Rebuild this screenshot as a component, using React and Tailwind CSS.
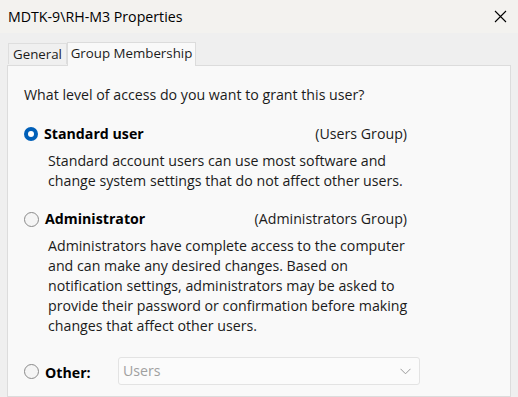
import React from "react";

function Radio({ checked }) {
  if (checked) {
    return (
      <span className="flex h-[14px] w-[14px] shrink-0 items-center justify-center rounded-full bg-[#005fb8]">
        <span className="h-[6px] w-[6px] rounded-full bg-white" />
      </span>
    );
  }
  return (
    <span className="h-[15px] w-[15px] shrink-0 rounded-full border border-[#8a8a8a] bg-[#f5f5f5]" />
  );
}

function Option({ checked, label, group, children }) {
  return (
    <div className="flex flex-col">
      <div className="flex h-[20px] items-center">
        <Radio checked={checked} />
        <span className="ml-[6px] font-bold text-black">{label}</span>
        <span className="ml-auto whitespace-nowrap text-right">{group}</span>
      </div>
      <div className="mt-[7px] whitespace-nowrap pl-[24px] leading-[20px]">{children}</div>
    </div>
  );
}

export default function App() {
  return (
    <div
      className="flex h-[397px] w-[518px] flex-col overflow-hidden bg-[#efefef] text-[14.2px] text-[#1b1b1b]"
      style={{ fontFamily: '"Segoe UI", "Open Sans", sans-serif' }}
    >
      {/* title bar */}
      <div className="flex h-[33px] shrink-0 items-center justify-between bg-[#f3f2ef] pl-[8px] pr-[11px]">
        <span className="text-[14.2px] text-black">MDTK-9\RH-M3 Properties</span>
        <svg width="13" height="13" viewBox="0 0 13 13" className="text-black">
          <path d="M1 1 L12 12 M12 1 L1 12" stroke="currentColor" strokeWidth="1.1" />
        </svg>
      </div>

      {/* tabs */}
      <div className="flex h-[32px] shrink-0 items-end pl-[8px]">
        <div className="mb-[1px] flex h-[21px] w-[59px] items-center justify-center whitespace-nowrap border border-b-0 border-[#dedede] bg-[#f0f0f0] pt-[2px] text-[13.3px]">
          General
        </div>
        <div className="relative z-10 -mb-[1px] flex h-[24px] w-[129px] items-center justify-center whitespace-nowrap border border-b-0 border-[#dcdcdc] bg-[#f9f9f9] pb-[2px] text-[13.3px]">
          Group Membership
        </div>
      </div>

      {/* panel */}
      <div className="ml-[7px] mr-[7px] flex-1 border border-[#dcdcdc] bg-[#f9f9f9] pl-[16px] pt-[19px]">
        <div className="w-[383px]">
          <div className="h-[20px] whitespace-nowrap leading-[20px]">What level of access do you want to grant this user?</div>

          <div className="mt-[19px]">
            <Option checked label="Standard user" group="(Users Group)">
              Standard account users can use most software and
              <br />
              change system settings that do not affect other users.
            </Option>
          </div>

          <div className="mt-[18px]">
            <Option label="Administrator" group="(Administrators Group)">
              Administrators have complete access to the computer
              <br />
              and can make any desired changes. Based on
              <br />
              notification settings, administrators may be asked to
              <br />
              provide their password or confirmation before making
              <br />
              changes that affect other users.
            </Option>
          </div>
        </div>

        <div className="mt-[21px] flex items-center">
          <Radio />
          <span className="ml-[6px] mt-[4px] w-[73px] shrink-0 font-bold text-black">Other:</span>
          <div className="flex h-[28px] w-[302px] shrink-0 items-center justify-between rounded-[3px] border border-[#e3e3e3] bg-[#fbfbfb] pl-[4px] pr-[8px] text-[#a0a0a0]">
            <span>Users</span>
            <svg width="11" height="7" viewBox="0 0 11 7">
              <path d="M0.5 0.8 L5.5 5.8 L10.5 0.8" fill="none" stroke="#9a9a9a" strokeWidth="1" />
            </svg>
          </div>
        </div>
      </div>
    </div>
  );
}
